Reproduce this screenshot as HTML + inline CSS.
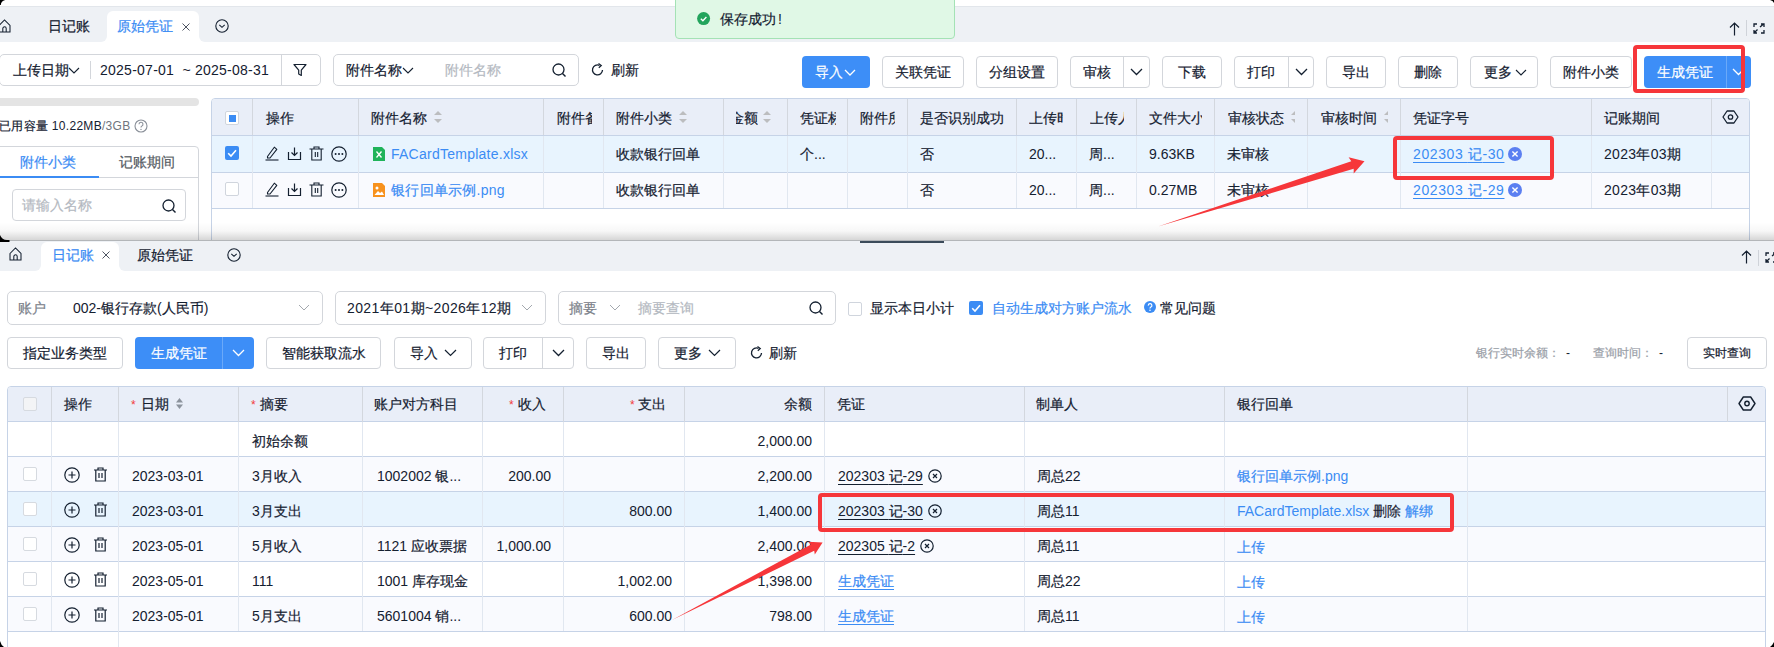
<!DOCTYPE html><html><head><meta charset="utf-8"><style>
html,body{margin:0;padding:0}
body{width:1774px;height:647px;position:relative;overflow:hidden;background:#fff;font-family:"Liberation Sans",sans-serif}
.t{position:absolute;white-space:nowrap;line-height:20px;font-size:14px}
.c{-webkit-text-stroke:0.2px currentColor}
svg{overflow:visible}
</style></head><body>
<div style="position:absolute;left:0px;top:6px;width:1774px;height:36px;background:#eef1f5;border-top:1px solid #e2e6eb;box-sizing:border-box;"></div>
<div style="position:absolute;left:101px;top:36px;width:6px;height:6px;background:#fff;"></div>
<div style="position:absolute;left:101px;top:30px;width:6px;height:12px;background:#eef1f5;border-bottom-right-radius:6px;"></div>
<div style="position:absolute;left:199px;top:36px;width:6px;height:6px;background:#fff;"></div>
<div style="position:absolute;left:199px;top:30px;width:6px;height:12px;background:#eef1f5;border-bottom-left-radius:6px;"></div>
<div style="position:absolute;left:107px;top:11px;width:92px;height:31px;background:#fff;border-radius:6px 6px 0 0;"></div>
<svg style="position:absolute;left:-2px;top:19px;" width="14" height="14" viewBox="0 0 14 14"><path d="M1 6.5 L6.5 1 L12 6.5 V13 H1 Z" fill="none" stroke="#142030" stroke-width="1.05"/><path d="M4.8 13 V9.5 A1.7 1.7 0 0 1 8.2 9.5 V13" fill="none" stroke="#142030" stroke-width="1.05"/></svg>
<div class="t" style="left:48px;top:16px;font-size:14px;color:#142030;"><span class="c">日记账</span></div>
<div class="t" style="left:117px;top:16px;font-size:14px;color:#3b8cf4;"><span class="c">原始凭证</span></div>
<svg style="position:absolute;left:182px;top:23px;" width="8" height="8" viewBox="0 0 8 8"><path d="M0.5 0.5 L7.5 7.5 M7.5 0.5 L0.5 7.5" stroke="#3a4250" stroke-width="0.9"/></svg>
<svg style="position:absolute;left:215px;top:19px;" width="14" height="14" viewBox="0 0 14 14"><circle cx="7" cy="7" r="6.2" fill="none" stroke="#142030" stroke-width="1.1"/><polyline points="4.3,5.8 7,8.3 9.7,5.8" fill="none" stroke="#142030" stroke-width="1.1"/></svg>
<svg style="position:absolute;left:1729px;top:22px;" width="11" height="14" viewBox="0 0 11 14"><path d="M5.5 13.5 V1 M1 5.5 L5.5 1 L10 5.5" fill="none" stroke="#142030" stroke-width="1.2"/></svg>
<div style="position:absolute;left:1746px;top:20px;width:1px;height:16px;background:#cfd3d9;"></div>
<svg style="position:absolute;left:1753px;top:23px;" width="12" height="11" viewBox="0 0 12 11"><path d="M1 4 V1 H4 M8 1 H11 V4 M11 7 V10 H8 M4 10 H1 V7 M7 4 L10 1.5 M1.5 9.5 L4.5 6.5" fill="none" stroke="#142030" stroke-width="1.3"/></svg>
<div style="position:absolute;left:675px;top:-5px;width:280px;height:44px;background:#e0f8e6;border:1px solid #a4e2b5;border-radius:4px;box-sizing:border-box;"></div>
<svg style="position:absolute;left:697px;top:12px;" width="13" height="13" viewBox="0 0 13 13"><circle cx="6.6" cy="6.6" r="6.5" fill="#22a45c"/><polyline points="3.8,6.8 5.9,8.8 9.4,5" fill="none" stroke="#fff" stroke-width="1.3"/></svg>
<div class="t" style="left:720px;top:9px;font-size:14px;color:#142030;"><span class="c">保存成功</span><span style="margin-left:2px">!</span></div>
<div style="position:absolute;left:-1px;top:54px;width:322px;height:32px;border:1px solid #d3d6db;border-radius:5px;box-sizing:border-box;"></div>
<div class="t" style="left:13px;top:60px;font-size:14px;color:#142030;"><span class="c">上传日期</span></div>
<svg style="position:absolute;left:67.5px;top:66.5px;" width="12" height="7.0" viewBox="0 0 12 7.0"><polyline points="1,1 6.0,6.0 11,1" fill="none" stroke="#142030" stroke-width="1.1"/></svg>
<div style="position:absolute;left:90px;top:61px;width:1px;height:18px;background:#d3d6db;"></div>
<div class="t" style="left:100px;top:60px;font-size:14px;color:#142030;letter-spacing:0.25px;">2025-07-01 &nbsp;~ 2025-08-31</div>
<div style="position:absolute;left:281px;top:54px;width:1px;height:32px;background:#d3d6db;"></div>
<svg style="position:absolute;left:293px;top:63px;" width="14" height="14" viewBox="0 0 14 14"><path d="M1 1.5 H13 L8.3 7.2 V12.5 L5.7 11 V7.2 Z" fill="none" stroke="#142030" stroke-width="1.2" stroke-linejoin="round"/></svg>
<div style="position:absolute;left:333px;top:54px;width:246px;height:32px;border:1px solid #d3d6db;border-radius:5px;box-sizing:border-box;"></div>
<div class="t" style="left:346px;top:60px;font-size:14px;color:#142030;"><span class="c">附件名称</span></div>
<svg style="position:absolute;left:401.5px;top:66.5px;" width="12" height="7.0" viewBox="0 0 12 7.0"><polyline points="1,1 6.0,6.0 11,1" fill="none" stroke="#142030" stroke-width="1.1"/></svg>
<div class="t" style="left:445px;top:60px;font-size:14px;color:#b4b9c1;"><span class="c">附件名称</span></div>
<svg style="position:absolute;left:552px;top:63px;" width="15" height="15" viewBox="0 0 15 15"><circle cx="6.5" cy="6.5" r="5.5" fill="none" stroke="#142030" stroke-width="1.3"/><path d="M10.5 10.5 L13.5 13.5" stroke="#142030" stroke-width="1.4"/></svg>
<svg style="position:absolute;left:591px;top:63px;" width="14" height="14" viewBox="0 0 14 14"><path d="M11.5 7 A5 5 0 1 1 8.5 2.3" fill="none" stroke="#142030" stroke-width="1.3"/><path d="M7.5 0.5 L10.3 2.5 L7.8 4.8" fill="none" stroke="#142030" stroke-width="1.2"/></svg>
<div class="t" style="left:611px;top:60px;font-size:14px;color:#142030;"><span class="c">刷新</span></div>
<div style="position:absolute;left:802px;top:56px;width:68px;height:32px;background:#3d8ef7;border-radius:4px;"></div>
<div class="t" style="left:815px;top:62px;font-size:14px;color:#fff;"><span class="c">导入</span></div>
<svg style="position:absolute;left:843.5px;top:68.5px;" width="12" height="7.0" viewBox="0 0 12 7.0"><polyline points="1,1 6.0,6.0 11,1" fill="none" stroke="#fff" stroke-width="1.3"/></svg>
<div style="position:absolute;left:882px;top:56px;width:82px;height:32px;background:#fff;border:1px solid #d3d6db;border-radius:4px;box-sizing:border-box;"></div>
<div class="t" style="left:882px;top:62.0px;width:82px;text-align:center;font-size:14px;color:#142030"><span class="c">关联凭证</span></div>
<div style="position:absolute;left:976px;top:56px;width:82px;height:32px;background:#fff;border:1px solid #d3d6db;border-radius:4px;box-sizing:border-box;"></div>
<div class="t" style="left:976px;top:62.0px;width:82px;text-align:center;font-size:14px;color:#142030"><span class="c">分组设置</span></div>
<div style="position:absolute;left:1070px;top:56px;width:80px;height:32px;background:#fff;border:1px solid #d3d6db;border-radius:4px;box-sizing:border-box;"></div>
<div style="position:absolute;left:1123px;top:56px;width:1px;height:32px;background:#d3d6db;"></div>
<svg style="position:absolute;left:1130.0px;top:68.25px;" width="13" height="7.5" viewBox="0 0 13 7.5"><polyline points="1,1 6.5,6.5 12,1" fill="none" stroke="#142030" stroke-width="1.3"/></svg>
<div class="t" style="left:1070px;top:62.0px;width:53px;text-align:center;font-size:14px;color:#142030"><span class="c">审核</span></div>
<div style="position:absolute;left:1162px;top:56px;width:60px;height:32px;background:#fff;border:1px solid #d3d6db;border-radius:4px;box-sizing:border-box;"></div>
<div class="t" style="left:1162px;top:62.0px;width:60px;text-align:center;font-size:14px;color:#142030"><span class="c">下载</span></div>
<div style="position:absolute;left:1234px;top:56px;width:80px;height:32px;background:#fff;border:1px solid #d3d6db;border-radius:4px;box-sizing:border-box;"></div>
<div style="position:absolute;left:1288px;top:56px;width:1px;height:32px;background:#d3d6db;"></div>
<svg style="position:absolute;left:1294.5px;top:68.25px;" width="13" height="7.5" viewBox="0 0 13 7.5"><polyline points="1,1 6.5,6.5 12,1" fill="none" stroke="#142030" stroke-width="1.3"/></svg>
<div class="t" style="left:1234px;top:62.0px;width:54px;text-align:center;font-size:14px;color:#142030"><span class="c">打印</span></div>
<div style="position:absolute;left:1326px;top:56px;width:60px;height:32px;background:#fff;border:1px solid #d3d6db;border-radius:4px;box-sizing:border-box;"></div>
<div class="t" style="left:1326px;top:62.0px;width:60px;text-align:center;font-size:14px;color:#142030"><span class="c">导出</span></div>
<div style="position:absolute;left:1398px;top:56px;width:60px;height:32px;background:#fff;border:1px solid #d3d6db;border-radius:4px;box-sizing:border-box;"></div>
<div class="t" style="left:1398px;top:62.0px;width:60px;text-align:center;font-size:14px;color:#142030"><span class="c">删除</span></div>
<div style="position:absolute;left:1470px;top:56px;width:68px;height:32px;background:#fff;border:1px solid #d3d6db;border-radius:4px;box-sizing:border-box;"></div>
<div class="t" style="left:1484px;top:62px;font-size:14px;color:#142030;"><span class="c">更多</span></div>
<svg style="position:absolute;left:1514.5px;top:68.5px;" width="12" height="7.0" viewBox="0 0 12 7.0"><polyline points="1,1 6.0,6.0 11,1" fill="none" stroke="#142030" stroke-width="1.1"/></svg>
<div style="position:absolute;left:1550px;top:56px;width:82px;height:32px;background:#fff;border:1px solid #d3d6db;border-radius:4px;box-sizing:border-box;"></div>
<div class="t" style="left:1550px;top:62.0px;width:82px;text-align:center;font-size:14px;color:#142030"><span class="c">附件小类</span></div>
<div style="position:absolute;left:1644px;top:56px;width:107px;height:32px;background:#3d8ef7;border-radius:4px;"></div>
<div style="position:absolute;left:1726px;top:56px;width:1px;height:32px;background:#6aa9f9;"></div>
<svg style="position:absolute;left:1732.0px;top:68.25px;" width="13" height="7.5" viewBox="0 0 13 7.5"><polyline points="1,1 6.5,6.5 12,1" fill="none" stroke="#fff" stroke-width="1.3"/></svg>
<div class="t" style="left:1644px;top:62.0px;width:82px;text-align:center;font-size:14px;color:#fff"><span class="c">生成凭证</span></div>
<div style="position:absolute;left:-5px;top:98px;width:204px;height:8px;background:#e4e4e4;border-radius:4px;"></div>
<div class="t" style="left:-1px;top:116px;font-size:12px;color:#142030;letter-spacing:0.3px;"><span class="c">已用容量</span> 10.22MB<span style="color:#6f757d">/3GB</span></div>
<svg style="position:absolute;left:133.5px;top:119px;" width="14" height="14" viewBox="0 0 14 14"><circle cx="7" cy="7" r="6" fill="none" stroke="#8a9099" stroke-width="1.1"/><path d="M5 5.3 A2 2 0 1 1 7.6 7.2 Q7 7.5 7 8.6" fill="none" stroke="#8a9099" stroke-width="1.1"/><circle cx="7" cy="10.4" r="0.7" fill="#8a9099"/></svg>
<div style="position:absolute;left:-5px;top:146px;width:204px;height:120px;border:1px solid #d3d6db;border-radius:4px;box-sizing:border-box;"></div>
<div style="position:absolute;left:0px;top:177px;width:198px;height:1px;background:#d3d6db;"></div>
<div style="position:absolute;left:0px;top:176px;width:99px;height:2px;background:#3b8cf4;"></div>
<div class="t" style="left:20px;top:152px;font-size:14px;color:#3b8cf4;"><span class="c">附件小类</span></div>
<div class="t" style="left:119px;top:152px;font-size:14px;color:#555b63;"><span class="c">记账期间</span></div>
<div style="position:absolute;left:12px;top:189px;width:174px;height:32px;border:1px solid #d3d6db;border-radius:4px;box-sizing:border-box;"></div>
<div class="t" style="left:22px;top:195px;font-size:14px;color:#b4b9c1;"><span class="c">请输入名称</span></div>
<svg style="position:absolute;left:162px;top:199px;" width="15" height="15" viewBox="0 0 15 15"><circle cx="6.5" cy="6.5" r="5.5" fill="none" stroke="#142030" stroke-width="1.3"/><path d="M10.5 10.5 L13.5 13.5" stroke="#142030" stroke-width="1.4"/></svg>
<div style="position:absolute;left:211px;top:98px;width:1539px;height:150px;border:1px solid #c6d3e7;border-radius:4px 4px 0 0;box-sizing:border-box;background:#fff;"></div>
<div style="position:absolute;left:212px;top:99px;width:1537px;height:36px;background:#e9eef8;border-radius:3px 3px 0 0;"></div>
<div style="position:absolute;left:212px;top:135px;width:1537px;height:37px;background:#e8f4fe;"></div>
<div style="position:absolute;left:212px;top:172px;width:1537px;height:36px;background:#f9fafe;"></div>
<div style="position:absolute;left:211px;top:135px;width:1539px;height:1px;background:#c6d3e7;"></div>
<div style="position:absolute;left:211px;top:172px;width:1539px;height:1px;background:#c6d3e7;"></div>
<div style="position:absolute;left:211px;top:208px;width:1539px;height:1px;background:#c6d3e7;"></div>
<div style="position:absolute;left:252px;top:99px;width:1px;height:36px;background:#d3d7de;"></div>
<div style="position:absolute;left:252px;top:136px;width:1px;height:72px;background:#e1e7f0;"></div>
<div style="position:absolute;left:358px;top:99px;width:1px;height:36px;background:#d3d7de;"></div>
<div style="position:absolute;left:358px;top:136px;width:1px;height:72px;background:#e1e7f0;"></div>
<div style="position:absolute;left:543px;top:99px;width:1px;height:36px;background:#d3d7de;"></div>
<div style="position:absolute;left:543px;top:136px;width:1px;height:72px;background:#e1e7f0;"></div>
<div style="position:absolute;left:603px;top:99px;width:1px;height:36px;background:#d3d7de;"></div>
<div style="position:absolute;left:603px;top:136px;width:1px;height:72px;background:#e1e7f0;"></div>
<div style="position:absolute;left:723px;top:99px;width:1px;height:36px;background:#d3d7de;"></div>
<div style="position:absolute;left:723px;top:136px;width:1px;height:72px;background:#e1e7f0;"></div>
<div style="position:absolute;left:787px;top:99px;width:1px;height:36px;background:#d3d7de;"></div>
<div style="position:absolute;left:787px;top:136px;width:1px;height:72px;background:#e1e7f0;"></div>
<div style="position:absolute;left:847px;top:99px;width:1px;height:36px;background:#d3d7de;"></div>
<div style="position:absolute;left:847px;top:136px;width:1px;height:72px;background:#e1e7f0;"></div>
<div style="position:absolute;left:907px;top:99px;width:1px;height:36px;background:#d3d7de;"></div>
<div style="position:absolute;left:907px;top:136px;width:1px;height:72px;background:#e1e7f0;"></div>
<div style="position:absolute;left:1016px;top:99px;width:1px;height:36px;background:#d3d7de;"></div>
<div style="position:absolute;left:1016px;top:136px;width:1px;height:72px;background:#e1e7f0;"></div>
<div style="position:absolute;left:1076px;top:99px;width:1px;height:36px;background:#d3d7de;"></div>
<div style="position:absolute;left:1076px;top:136px;width:1px;height:72px;background:#e1e7f0;"></div>
<div style="position:absolute;left:1136px;top:99px;width:1px;height:36px;background:#d3d7de;"></div>
<div style="position:absolute;left:1136px;top:136px;width:1px;height:72px;background:#e1e7f0;"></div>
<div style="position:absolute;left:1214px;top:99px;width:1px;height:36px;background:#d3d7de;"></div>
<div style="position:absolute;left:1214px;top:136px;width:1px;height:72px;background:#e1e7f0;"></div>
<div style="position:absolute;left:1307px;top:99px;width:1px;height:36px;background:#d3d7de;"></div>
<div style="position:absolute;left:1307px;top:136px;width:1px;height:72px;background:#e1e7f0;"></div>
<div style="position:absolute;left:1400px;top:99px;width:1px;height:36px;background:#d3d7de;"></div>
<div style="position:absolute;left:1400px;top:136px;width:1px;height:72px;background:#e1e7f0;"></div>
<div style="position:absolute;left:1591px;top:99px;width:1px;height:36px;background:#d3d7de;"></div>
<div style="position:absolute;left:1591px;top:136px;width:1px;height:72px;background:#e1e7f0;"></div>
<div style="position:absolute;left:1711px;top:99px;width:1px;height:36px;background:#d3d7de;"></div>
<div style="position:absolute;left:1711px;top:136px;width:1px;height:72px;background:#e1e7f0;"></div>
<div style="position:absolute;left:225px;top:111px;width:14px;height:14px;background:#fff;border:1px solid #d0d5dd;border-radius:2px;box-sizing:border-box;"></div>
<div style="position:absolute;left:228.5px;top:114.5px;width:7px;height:7px;background:#3b8cf4;"></div>
<div class="t" style="left:266px;top:108px;font-size:14px;color:#142030;"><span class="c">操作</span></div>
<div class="t" style="left:371px;top:108px;font-size:14px;color:#142030;"><span class="c">附件名称</span></div>
<svg style="position:absolute;left:434px;top:111px;" width="8" height="12" viewBox="0 0 8 12"><path d="M0 4 L4 0 L8 4 Z M0 8 L4 12 L8 8 Z" fill="#bcbdbf"/></svg>
<div class="t" style="left:557px;top:108px;width:35px;overflow:hidden;color:#142030"><span class="c">附件备注</span></div>
<div class="t" style="left:616px;top:108px;font-size:14px;color:#142030;"><span class="c">附件小类</span></div>
<svg style="position:absolute;left:679px;top:111px;" width="8" height="12" viewBox="0 0 8 12"><path d="M0 4 L4 0 L8 4 Z M0 8 L4 12 L8 8 Z" fill="#bcbdbf"/></svg>
<div class="t" style="left:736px;top:108px;width:22px;overflow:hidden;direction:rtl;color:#142030"><span class="c">金额</span></div>
<svg style="position:absolute;left:763px;top:111px;" width="8" height="12" viewBox="0 0 8 12"><path d="M0 4 L4 0 L8 4 Z M0 8 L4 12 L8 8 Z" fill="#bcbdbf"/></svg>
<div class="t" style="left:800px;top:108px;width:36px;overflow:hidden;color:#142030"><span class="c">凭证标签</span></div>
<div class="t" style="left:860px;top:108px;width:35px;overflow:hidden;color:#142030"><span class="c">附件所属</span></div>
<div class="t" style="left:920px;top:108px;font-size:14px;color:#142030;"><span class="c">是否识别成功</span></div>
<div class="t" style="left:1029px;top:108px;width:34px;overflow:hidden;color:#142030"><span class="c">上传时间</span></div>
<div class="t" style="left:1090px;top:108px;width:34px;overflow:hidden;color:#142030"><span class="c">上传人</span></div>
<div class="t" style="left:1149px;top:108px;width:53px;overflow:hidden;color:#142030"><span class="c">文件大小</span></div>
<div class="t" style="left:1228px;top:108px;font-size:14px;color:#142030;"><span class="c">审核状态</span></div>
<svg style="position:absolute;left:1291px;top:111px;overflow:hidden;" width="4" height="12" viewBox="0 0 4 12"><path d="M0 4 L4 0 L8 4 Z M0 8 L4 12 L8 8 Z" fill="#bcbdbf"/></svg>
<div class="t" style="left:1321px;top:108px;font-size:14px;color:#142030;"><span class="c">审核时间</span></div>
<svg style="position:absolute;left:1384px;top:111px;overflow:hidden;" width="4" height="12" viewBox="0 0 4 12"><path d="M0 4 L4 0 L8 4 Z M0 8 L4 12 L8 8 Z" fill="#bcbdbf"/></svg>
<div class="t" style="left:1413px;top:108px;font-size:14px;color:#142030;"><span class="c">凭证字号</span></div>
<div class="t" style="left:1604px;top:108px;font-size:14px;color:#142030;"><span class="c">记账期间</span></div>
<svg style="position:absolute;left:1721.5px;top:110.0px;" width="17" height="14" viewBox="0 0 17 14"><polygon points="1,7.0 5.050000000000001,1 11.95,1 16,7.0 11.95,13 5.050000000000001,13" fill="none" stroke="#142030" stroke-width="1.3" stroke-linejoin="round"/><circle cx="8.5" cy="7.0" r="2.2" fill="none" stroke="#142030" stroke-width="1.3"/></svg>
<div style="position:absolute;left:225px;top:146px;width:14px;height:14px;background:#3b8cf4;border-radius:2px;"></div>
<svg style="position:absolute;left:225px;top:146px;" width="14" height="14" viewBox="0 0 14 14"><polyline points="3.2,7.2 6,10 11,4.3" fill="none" stroke="#fff" stroke-width="1.6"/></svg>
<svg style="position:absolute;left:265px;top:146px;" width="15" height="15" viewBox="0 0 15 15"><path d="M2.5 10.5 L9.3 1.2 L11.8 3.4 L5 12 H2.5 Z" fill="none" stroke="#142030" stroke-width="1.1" stroke-linejoin="round"/><path d="M0.5 14 H13.5" stroke="#142030" stroke-width="1.1"/></svg>
<svg style="position:absolute;left:287px;top:146px;" width="15" height="15" viewBox="0 0 15 15"><path d="M7.5 1.5 V9.5 M4.5 6.5 L7.5 9.5 L10.5 6.5" fill="none" stroke="#142030" stroke-width="1.2"/><path d="M1.5 6 V13.5 H13.5 V6" fill="none" stroke="#142030" stroke-width="1.2"/></svg>
<svg style="position:absolute;left:309px;top:146px;" width="15" height="15" viewBox="0 0 15 15"><path d="M0.5 3 H14.5 M5 3 V1 H10 V3 M2.8 3 V14 H12.2 V3 M6.3 6 V11 M8.7 6 V11" fill="none" stroke="#142030" stroke-width="1.1"/></svg>
<svg style="position:absolute;left:331px;top:145.5px;" width="16" height="16" viewBox="0 0 16 16"><circle cx="8" cy="8" r="7.2" fill="none" stroke="#142030" stroke-width="1.2"/><circle cx="4.6" cy="8" r="1" fill="#142030"/><circle cx="8" cy="8" r="1" fill="#142030"/><circle cx="11.4" cy="8" r="1" fill="#142030"/></svg>
<svg style="position:absolute;left:373px;top:147px;" width="12" height="14" viewBox="0 0 12 14"><path d="M0 0 H9 L12 3 V14 H0 Z" fill="#1fb35a"/><path d="M3.5 4.5 L8.5 10.5 M8.5 4.5 L3.5 10.5" stroke="#fff" stroke-width="1.3"/></svg>
<div class="t" style="left:391px;top:144px;font-size:14px;color:#3b8cf4;letter-spacing:0.25px;">FACardTemplate.xlsx</div>
<div class="t" style="left:616px;top:144px;font-size:14px;color:#142030;"><span class="c">收款银行回单</span></div>
<div class="t" style="left:800px;top:144px;font-size:14px;color:#142030;"><span class="c">个</span>...</div>
<div class="t" style="left:920px;top:144px;font-size:14px;color:#142030;"><span class="c">否</span></div>
<div class="t" style="left:1029px;top:144px;font-size:14px;color:#142030;">20...</div>
<div class="t" style="left:1089px;top:144px;font-size:14px;color:#142030;"><span class="c">周</span>...</div>
<div class="t" style="left:1149px;top:144px;font-size:14px;color:#142030;">9.63KB</div>
<div class="t" style="left:1227px;top:144px;font-size:14px;color:#142030;"><span class="c">未审核</span></div>
<div class="t" style="left:1413px;top:144px;font-size:14px;color:#3b8cf4;letter-spacing:0.6px;"><span style="text-decoration:underline;text-underline-offset:3px">202303 <span class="c">记</span>-30</span></div>
<svg style="position:absolute;left:1508px;top:146.5px;" width="14" height="14" viewBox="0 0 14 14"><circle cx="7" cy="7" r="7" fill="#5b7ff1"/><path d="M4.4 4.4 L9.6 9.6 M9.6 4.4 L4.4 9.6" stroke="#fff" stroke-width="1.4"/></svg>
<div class="t" style="left:1604px;top:144px;font-size:14px;color:#142030;letter-spacing:0.3px;">2023<span class="c">年</span>03<span class="c">期</span></div>
<div style="position:absolute;left:225px;top:182px;width:14px;height:14px;background:#fff;border:1px solid #d0d5dd;border-radius:2px;box-sizing:border-box;"></div>
<svg style="position:absolute;left:265px;top:182px;" width="15" height="15" viewBox="0 0 15 15"><path d="M2.5 10.5 L9.3 1.2 L11.8 3.4 L5 12 H2.5 Z" fill="none" stroke="#142030" stroke-width="1.1" stroke-linejoin="round"/><path d="M0.5 14 H13.5" stroke="#142030" stroke-width="1.1"/></svg>
<svg style="position:absolute;left:287px;top:182px;" width="15" height="15" viewBox="0 0 15 15"><path d="M7.5 1.5 V9.5 M4.5 6.5 L7.5 9.5 L10.5 6.5" fill="none" stroke="#142030" stroke-width="1.2"/><path d="M1.5 6 V13.5 H13.5 V6" fill="none" stroke="#142030" stroke-width="1.2"/></svg>
<svg style="position:absolute;left:309px;top:182px;" width="15" height="15" viewBox="0 0 15 15"><path d="M0.5 3 H14.5 M5 3 V1 H10 V3 M2.8 3 V14 H12.2 V3 M6.3 6 V11 M8.7 6 V11" fill="none" stroke="#142030" stroke-width="1.1"/></svg>
<svg style="position:absolute;left:331px;top:181.5px;" width="16" height="16" viewBox="0 0 16 16"><circle cx="8" cy="8" r="7.2" fill="none" stroke="#142030" stroke-width="1.2"/><circle cx="4.6" cy="8" r="1" fill="#142030"/><circle cx="8" cy="8" r="1" fill="#142030"/><circle cx="11.4" cy="8" r="1" fill="#142030"/></svg>
<svg style="position:absolute;left:373px;top:183px;" width="12" height="14" viewBox="0 0 12 14"><path d="M0 0 H9 L12 3 V14 H0 Z" fill="#f7921e"/><circle cx="4" cy="5" r="1.5" fill="#fff"/><path d="M1.5 12 L5 8 L7 10 L9 8.5 L11 12 Z" fill="#fff"/></svg>
<div class="t" style="left:391px;top:180px;font-size:14px;color:#3b8cf4;letter-spacing:0.25px;"><span class="c">银行回单示例</span>.png</div>
<div class="t" style="left:616px;top:180px;font-size:14px;color:#142030;"><span class="c">收款银行回单</span></div>
<div class="t" style="left:920px;top:180px;font-size:14px;color:#142030;"><span class="c">否</span></div>
<div class="t" style="left:1029px;top:180px;font-size:14px;color:#142030;">20...</div>
<div class="t" style="left:1089px;top:180px;font-size:14px;color:#142030;"><span class="c">周</span>...</div>
<div class="t" style="left:1149px;top:180px;font-size:14px;color:#142030;">0.27MB</div>
<div class="t" style="left:1227px;top:180px;font-size:14px;color:#142030;"><span class="c">未审核</span></div>
<div class="t" style="left:1413px;top:180px;font-size:14px;color:#3b8cf4;letter-spacing:0.6px;"><span style="text-decoration:underline;text-underline-offset:3px">202303 <span class="c">记</span>-29</span></div>
<svg style="position:absolute;left:1508px;top:183px;" width="14" height="14" viewBox="0 0 14 14"><circle cx="7" cy="7" r="7" fill="#5b7ff1"/><path d="M4.4 4.4 L9.6 9.6 M9.6 4.4 L4.4 9.6" stroke="#fff" stroke-width="1.4"/></svg>
<div class="t" style="left:1604px;top:180px;font-size:14px;color:#142030;letter-spacing:0.3px;">2023<span class="c">年</span>03<span class="c">期</span></div>
<div style="position:absolute;left:1393px;top:135.5px;width:161px;height:44px;border:4px solid #f6363a;border-radius:4px;box-sizing:border-box;"></div>
<div style="position:absolute;left:1633px;top:45px;width:112px;height:48px;border:4px solid #f6363a;border-radius:4px;box-sizing:border-box;"></div>
<div style="position:absolute;left:0px;top:222px;width:1774px;height:18px;background:linear-gradient(to bottom, rgba(0,0,0,0) 0%, rgba(0,0,0,0.03) 50%, rgba(0,0,0,0.16) 100%);"></div>
<div style="position:absolute;left:0px;top:240px;width:1774px;height:1px;background:#b3b6b9;"></div>
<svg style="position:absolute;left:0;top:0" width="1774" height="647"><polygon points="1158.0,226.5 1353.7,168.8 1353.7,173.5 1364.5,161.2 1348.6,157.3 1351.3,161.2" fill="#f6363a"/></svg>
<div style="position:absolute;left:0px;top:241px;width:1774px;height:406px;background:#fff;"></div>
<div style="position:absolute;left:0px;top:241px;width:1774px;height:30px;background:#eef1f5;"></div>
<div style="position:absolute;left:35px;top:265px;width:6px;height:6px;background:#fff;"></div>
<div style="position:absolute;left:35px;top:259px;width:6px;height:12px;background:#eef1f5;border-bottom-right-radius:6px;"></div>
<div style="position:absolute;left:119px;top:265px;width:6px;height:6px;background:#fff;"></div>
<div style="position:absolute;left:119px;top:259px;width:6px;height:12px;background:#eef1f5;border-bottom-left-radius:6px;"></div>
<div style="position:absolute;left:41px;top:242px;width:78px;height:29px;background:#fff;border-radius:6px 6px 0 0;"></div>
<svg style="position:absolute;left:9px;top:247px;" width="14" height="14" viewBox="0 0 14 14"><path d="M1 6.5 L6.5 1 L12 6.5 V13 H1 Z" fill="none" stroke="#142030" stroke-width="1.05"/><path d="M4.8 13 V9.5 A1.7 1.7 0 0 1 8.2 9.5 V13" fill="none" stroke="#142030" stroke-width="1.05"/></svg>
<div class="t" style="left:52px;top:245px;font-size:14px;color:#3b8cf4;"><span class="c">日记账</span></div>
<svg style="position:absolute;left:102px;top:251px;" width="8" height="8" viewBox="0 0 8 8"><path d="M0.5 0.5 L7.5 7.5 M7.5 0.5 L0.5 7.5" stroke="#3a4250" stroke-width="0.9"/></svg>
<div class="t" style="left:137px;top:245px;font-size:14px;color:#142030;"><span class="c">原始凭证</span></div>
<svg style="position:absolute;left:227px;top:248px;" width="14" height="14" viewBox="0 0 14 14"><circle cx="7" cy="7" r="6.2" fill="none" stroke="#142030" stroke-width="1.1"/><polyline points="4.3,5.8 7,8.3 9.7,5.8" fill="none" stroke="#142030" stroke-width="1.1"/></svg>
<svg style="position:absolute;left:1741px;top:250px;" width="11" height="14" viewBox="0 0 11 14"><path d="M5.5 13.5 V1 M1 5.5 L5.5 1 L10 5.5" fill="none" stroke="#142030" stroke-width="1.2"/></svg>
<div style="position:absolute;left:1758px;top:250px;width:1px;height:16px;background:#cfd3d9;"></div>
<svg style="position:absolute;left:1765px;top:252px;" width="12" height="11" viewBox="0 0 12 11"><path d="M1 4 V1 H4 M8 1 H11 V4 M11 7 V10 H8 M4 10 H1 V7 M7 4 L10 1.5 M1.5 9.5 L4.5 6.5" fill="none" stroke="#142030" stroke-width="1.3"/></svg>
<div style="position:absolute;left:7px;top:291px;width:316px;height:34px;border:1px solid #d3d6db;border-radius:5px;box-sizing:border-box;"></div>
<div class="t" style="left:18px;top:298px;font-size:14px;color:#7b818a;"><span class="c">账户</span></div>
<div class="t" style="left:73px;top:298px;font-size:14px;color:#142030;">002-<span class="c">银行存款</span>(<span class="c">人民币</span>)</div>
<svg style="position:absolute;left:298.0px;top:304.0px;" width="12" height="7.0" viewBox="0 0 12 7.0"><polyline points="1,1 6.0,6.0 11,1" fill="none" stroke="#a3a8ae" stroke-width="1.0"/></svg>
<div style="position:absolute;left:335px;top:291px;width:211px;height:34px;border:1px solid #d3d6db;border-radius:5px;box-sizing:border-box;"></div>
<div class="t" style="left:347px;top:298px;font-size:14px;color:#142030;letter-spacing:0.4px;">2021<span class="c">年</span>01<span class="c">期</span>~2026<span class="c">年</span>12<span class="c">期</span></div>
<svg style="position:absolute;left:521.0px;top:304.0px;" width="12" height="7.0" viewBox="0 0 12 7.0"><polyline points="1,1 6.0,6.0 11,1" fill="none" stroke="#a3a8ae" stroke-width="1.0"/></svg>
<div style="position:absolute;left:558px;top:291px;width:278px;height:34px;border:1px solid #d3d6db;border-radius:5px;box-sizing:border-box;"></div>
<div class="t" style="left:569px;top:298px;font-size:14px;color:#7b818a;"><span class="c">摘要</span></div>
<svg style="position:absolute;left:609.0px;top:304.0px;" width="12" height="7.0" viewBox="0 0 12 7.0"><polyline points="1,1 6.0,6.0 11,1" fill="none" stroke="#a3a8ae" stroke-width="1.0"/></svg>
<div class="t" style="left:638px;top:298px;font-size:14px;color:#b4b9c1;"><span class="c">摘要查询</span></div>
<svg style="position:absolute;left:809px;top:301px;" width="15" height="15" viewBox="0 0 15 15"><circle cx="6.5" cy="6.5" r="5.5" fill="none" stroke="#142030" stroke-width="1.3"/><path d="M10.5 10.5 L13.5 13.5" stroke="#142030" stroke-width="1.4"/></svg>
<div style="position:absolute;left:848px;top:301.5px;width:14px;height:14px;background:#fff;border:1px solid #d0d5dd;border-radius:2px;box-sizing:border-box;"></div>
<div class="t" style="left:870px;top:298px;font-size:14px;color:#142030;"><span class="c">显示本日小计</span></div>
<div style="position:absolute;left:969px;top:301px;width:14px;height:14px;background:#3b8cf4;border-radius:2px;"></div>
<svg style="position:absolute;left:969px;top:301px;" width="14" height="14" viewBox="0 0 14 14"><polyline points="3.2,7.2 6,10 11,4.3" fill="none" stroke="#fff" stroke-width="1.6"/></svg>
<div class="t" style="left:992px;top:298px;font-size:14px;color:#3b8cf4;"><span class="c">自动生成对方账户流水</span></div>
<svg style="position:absolute;left:1144px;top:301px;" width="12" height="12" viewBox="0 0 12 12"><circle cx="6" cy="6" r="6" fill="#3b8cf4"/><path d="M4.3 4.6 A1.8 1.8 0 1 1 6.6 6.2 Q6 6.5 6 7.4" fill="none" stroke="#fff" stroke-width="1.2"/><circle cx="6" cy="9.2" r="0.8" fill="#fff"/></svg>
<div class="t" style="left:1160px;top:298px;font-size:14px;color:#142030;"><span class="c">常见问题</span></div>
<div style="position:absolute;left:7px;top:337px;width:116px;height:32px;background:#fff;border:1px solid #d3d6db;border-radius:4px;box-sizing:border-box;"></div>
<div class="t" style="left:7px;top:343.0px;width:116px;text-align:center;font-size:14px;color:#142030"><span class="c">指定业务类型</span></div>
<div style="position:absolute;left:135px;top:337px;width:119px;height:32px;background:#3d8ef7;border-radius:4px;"></div>
<div style="position:absolute;left:222px;top:337px;width:1px;height:32px;background:#6aa9f9;"></div>
<svg style="position:absolute;left:231.5px;top:349.25px;" width="13" height="7.5" viewBox="0 0 13 7.5"><polyline points="1,1 6.5,6.5 12,1" fill="none" stroke="#fff" stroke-width="1.3"/></svg>
<div class="t" style="left:135px;top:343.0px;width:87px;text-align:center;font-size:14px;color:#fff"><span class="c">生成凭证</span></div>
<div style="position:absolute;left:266px;top:337px;width:115px;height:32px;background:#fff;border:1px solid #d3d6db;border-radius:4px;box-sizing:border-box;"></div>
<div class="t" style="left:266px;top:343.0px;width:115px;text-align:center;font-size:14px;color:#142030"><span class="c">智能获取流水</span></div>
<div style="position:absolute;left:394px;top:337px;width:78px;height:32px;background:#fff;border:1px solid #d3d6db;border-radius:4px;box-sizing:border-box;"></div>
<div class="t" style="left:410px;top:343px;font-size:14px;color:#142030;"><span class="c">导入</span></div>
<svg style="position:absolute;left:443.5px;top:349.25px;" width="13" height="7.5" viewBox="0 0 13 7.5"><polyline points="1,1 6.5,6.5 12,1" fill="none" stroke="#142030" stroke-width="1.2"/></svg>
<div style="position:absolute;left:483px;top:337px;width:91px;height:32px;background:#fff;border:1px solid #d3d6db;border-radius:4px;box-sizing:border-box;"></div>
<div style="position:absolute;left:542px;top:337px;width:1px;height:32px;background:#d3d6db;"></div>
<svg style="position:absolute;left:551.5px;top:349.25px;" width="13" height="7.5" viewBox="0 0 13 7.5"><polyline points="1,1 6.5,6.5 12,1" fill="none" stroke="#142030" stroke-width="1.3"/></svg>
<div class="t" style="left:483px;top:343.0px;width:59px;text-align:center;font-size:14px;color:#142030"><span class="c">打印</span></div>
<div style="position:absolute;left:586px;top:337px;width:60px;height:32px;background:#fff;border:1px solid #d3d6db;border-radius:4px;box-sizing:border-box;"></div>
<div class="t" style="left:586px;top:343.0px;width:60px;text-align:center;font-size:14px;color:#142030"><span class="c">导出</span></div>
<div style="position:absolute;left:658px;top:337px;width:78px;height:32px;background:#fff;border:1px solid #d3d6db;border-radius:4px;box-sizing:border-box;"></div>
<div class="t" style="left:674px;top:343px;font-size:14px;color:#142030;"><span class="c">更多</span></div>
<svg style="position:absolute;left:707.5px;top:349.25px;" width="13" height="7.5" viewBox="0 0 13 7.5"><polyline points="1,1 6.5,6.5 12,1" fill="none" stroke="#142030" stroke-width="1.2"/></svg>
<svg style="position:absolute;left:750px;top:346px;" width="14" height="14" viewBox="0 0 14 14"><path d="M11.5 7 A5 5 0 1 1 8.5 2.3" fill="none" stroke="#142030" stroke-width="1.3"/><path d="M7.5 0.5 L10.3 2.5 L7.8 4.8" fill="none" stroke="#142030" stroke-width="1.2"/></svg>
<div class="t" style="left:769px;top:343px;font-size:14px;color:#142030;"><span class="c">刷新</span></div>
<div class="t" style="left:1476px;top:343px;font-size:12px;color:#9aa0a8;"><span class="c">银行实时余额：</span></div>
<div class="t" style="left:1566px;top:343px;font-size:12px;color:#142030;">-</div>
<div class="t" style="left:1593px;top:343px;font-size:12px;color:#9aa0a8;"><span class="c">查询时间：</span></div>
<div class="t" style="left:1659px;top:343px;font-size:12px;color:#142030;">-</div>
<div style="position:absolute;left:1687px;top:337px;width:80px;height:32px;background:#fff;border:1px solid #d3d6db;border-radius:4px;box-sizing:border-box;"></div>
<div class="t" style="left:1687px;top:343.0px;width:80px;text-align:center;font-size:12px;color:#142030"><span class="c">实时查询</span></div>
<div style="position:absolute;left:7px;top:386px;width:1759px;height:270px;border:1px solid #c6d3e7;border-radius:4px 4px 0 0;box-sizing:border-box;background:#fff;"></div>
<div style="position:absolute;left:8px;top:387px;width:1757px;height:35px;background:#e9eef8;border-radius:3px 3px 0 0;"></div>
<div style="position:absolute;left:8px;top:421px;width:1757px;height:35px;background:#fff;"></div>
<div style="position:absolute;left:8px;top:456px;width:1757px;height:35px;background:#f9fafe;"></div>
<div style="position:absolute;left:8px;top:491px;width:1757px;height:35px;background:#e8f4fe;"></div>
<div style="position:absolute;left:8px;top:526px;width:1757px;height:35px;background:#f9fafe;"></div>
<div style="position:absolute;left:8px;top:561px;width:1757px;height:35px;background:#fff;"></div>
<div style="position:absolute;left:8px;top:596px;width:1757px;height:35px;background:#f9fafe;"></div>
<div style="position:absolute;left:7px;top:421px;width:1759px;height:1px;background:#c6d3e7;"></div>
<div style="position:absolute;left:7px;top:456px;width:1759px;height:1px;background:#c6d3e7;"></div>
<div style="position:absolute;left:7px;top:491px;width:1759px;height:1px;background:#c6d3e7;"></div>
<div style="position:absolute;left:7px;top:526px;width:1759px;height:1px;background:#c6d3e7;"></div>
<div style="position:absolute;left:7px;top:561px;width:1759px;height:1px;background:#c6d3e7;"></div>
<div style="position:absolute;left:7px;top:596px;width:1759px;height:1px;background:#c6d3e7;"></div>
<div style="position:absolute;left:7px;top:631px;width:1759px;height:1px;background:#c6d3e7;"></div>
<div style="position:absolute;left:51px;top:387px;width:1px;height:35px;background:#d3d7de;"></div>
<div style="position:absolute;left:51px;top:422px;width:1px;height:209px;background:#e1e7f0;"></div>
<div style="position:absolute;left:118px;top:387px;width:1px;height:35px;background:#d3d7de;"></div>
<div style="position:absolute;left:118px;top:422px;width:1px;height:209px;background:#e1e7f0;"></div>
<div style="position:absolute;left:238px;top:387px;width:1px;height:35px;background:#d3d7de;"></div>
<div style="position:absolute;left:238px;top:422px;width:1px;height:209px;background:#e1e7f0;"></div>
<div style="position:absolute;left:362px;top:387px;width:1px;height:35px;background:#d3d7de;"></div>
<div style="position:absolute;left:362px;top:422px;width:1px;height:209px;background:#e1e7f0;"></div>
<div style="position:absolute;left:482px;top:387px;width:1px;height:35px;background:#d3d7de;"></div>
<div style="position:absolute;left:482px;top:422px;width:1px;height:209px;background:#e1e7f0;"></div>
<div style="position:absolute;left:563px;top:387px;width:1px;height:35px;background:#d3d7de;"></div>
<div style="position:absolute;left:563px;top:422px;width:1px;height:209px;background:#e1e7f0;"></div>
<div style="position:absolute;left:684px;top:387px;width:1px;height:35px;background:#d3d7de;"></div>
<div style="position:absolute;left:684px;top:422px;width:1px;height:209px;background:#e1e7f0;"></div>
<div style="position:absolute;left:824px;top:387px;width:1px;height:35px;background:#d3d7de;"></div>
<div style="position:absolute;left:824px;top:422px;width:1px;height:209px;background:#e1e7f0;"></div>
<div style="position:absolute;left:1024px;top:387px;width:1px;height:35px;background:#d3d7de;"></div>
<div style="position:absolute;left:1024px;top:422px;width:1px;height:209px;background:#e1e7f0;"></div>
<div style="position:absolute;left:1224px;top:387px;width:1px;height:35px;background:#d3d7de;"></div>
<div style="position:absolute;left:1224px;top:422px;width:1px;height:209px;background:#e1e7f0;"></div>
<div style="position:absolute;left:1467px;top:387px;width:1px;height:35px;background:#d3d7de;"></div>
<div style="position:absolute;left:1467px;top:422px;width:1px;height:209px;background:#e1e7f0;"></div>
<div style="position:absolute;left:1727px;top:387px;width:1px;height:35px;background:#d3d7de;"></div>
<div style="position:absolute;left:118px;top:631px;width:1px;height:20px;background:#e1e7f0;"></div>
<div style="position:absolute;left:23px;top:397px;width:14px;height:14px;background:#f3f4f6;border:1px solid #d6dae0;border-radius:2px;box-sizing:border-box;"></div>
<div class="t" style="left:64px;top:394px;font-size:14px;color:#142030;"><span class="c">操作</span></div>
<div class="t" style="left:131px;top:395px;font-size:12px;color:#f23c3c">*</div>
<div class="t" style="left:141px;top:394px;font-size:14px;color:#142030;"><span class="c">日期</span></div>
<svg style="position:absolute;left:176px;top:398px;" width="7" height="11" viewBox="0 0 7 11"><path d="M0 4.5 L3.5 0 L7 4.5 Z" fill="#8c939d"/><path d="M0 6.5 L3.5 11 L7 6.5 Z" fill="#8c939d"/></svg>
<div class="t" style="left:251px;top:395px;font-size:12px;color:#f23c3c">*</div>
<div class="t" style="left:260px;top:394px;font-size:14px;color:#142030;"><span class="c">摘要</span></div>
<div class="t" style="left:374px;top:394px;font-size:14px;color:#142030;"><span class="c">账户对方科目</span></div>
<div class="t" style="left:509px;top:395px;font-size:12px;color:#f23c3c">*</div>
<div class="t" style="left:518px;top:394px;font-size:14px;color:#142030;"><span class="c">收入</span></div>
<div class="t" style="left:630px;top:395px;font-size:12px;color:#f23c3c">*</div>
<div class="t" style="left:638px;top:394px;font-size:14px;color:#142030;"><span class="c">支出</span></div>
<div class="t" style="left:784px;top:394px;font-size:14px;color:#142030;"><span class="c">余额</span></div>
<div class="t" style="left:837px;top:394px;font-size:14px;color:#142030;"><span class="c">凭证</span></div>
<div class="t" style="left:1036px;top:394px;font-size:14px;color:#142030;"><span class="c">制单人</span></div>
<div class="t" style="left:1237px;top:394px;font-size:14px;color:#142030;"><span class="c">银行回单</span></div>
<svg style="position:absolute;left:1738.0px;top:396.0px;" width="18" height="15" viewBox="0 0 18 15"><polygon points="1,7.5 5.32,1 12.68,1 17,7.5 12.68,14 5.32,14" fill="none" stroke="#142030" stroke-width="1.4" stroke-linejoin="round"/><circle cx="9.0" cy="7.5" r="2.2" fill="none" stroke="#142030" stroke-width="1.4"/></svg>
<div class="t" style="left:252px;top:431px;font-size:14px;color:#142030;"><span class="c">初始余额</span></div>
<div class="t" style="left:612px;width:200px;text-align:right;top:431px;color:#142030">2,000.00</div>
<div style="position:absolute;left:23px;top:467px;width:14px;height:14px;background:#fff;border:1px solid #d6dae0;border-radius:2px;box-sizing:border-box;"></div>
<svg style="position:absolute;left:63.5px;top:467px;" width="16" height="16" viewBox="0 0 16 16"><circle cx="8" cy="8" r="7.2" fill="none" stroke="#142030" stroke-width="1.2"/><path d="M8 4.5 V11.5 M4.5 8 H11.5" stroke="#142030" stroke-width="1.2"/></svg>
<svg style="position:absolute;left:92.5px;top:467px;" width="15" height="15" viewBox="0 0 15 15"><path d="M1 3 H14 M5 3 V1 H10 V3 M2.8 3 V14 H12.2 V3 M6 6 V11 M9 6 V11" fill="none" stroke="#142030" stroke-width="1.2"/></svg>
<div class="t" style="left:132px;top:466px;font-size:14px;color:#142030;">2023-03-01</div>
<div class="t" style="left:252px;top:466px;font-size:14px;color:#142030;">3<span class="c">月收入</span></div>
<div class="t" style="left:377px;top:466px;font-size:14px;color:#142030;">1002002 <span class="c">银</span>...</div>
<div class="t" style="left:351px;width:200px;text-align:right;top:466px;color:#142030">200.00</div>
<div class="t" style="left:612px;width:200px;text-align:right;top:466px;color:#142030">2,200.00</div>
<div class="t" style="left:838px;top:466px;font-size:14px;color:#142030;"><span style="text-decoration:underline;text-underline-offset:3px">202303 <span class="c">记</span>-29</span></div>
<svg style="position:absolute;left:927.5px;top:469px;" width="14" height="14" viewBox="0 0 14 14"><circle cx="7" cy="7" r="6.2" fill="none" stroke="#142030" stroke-width="1.2"/><path d="M5 5 L9 9 M9 5 L5 9" stroke="#142030" stroke-width="1.2"/></svg>
<div class="t" style="left:1037px;top:466px;font-size:14px;color:#142030;"><span class="c">周总</span>22</div>
<div class="t" style="left:1237px;top:466px;font-size:14px;color:#3b8cf4;"><span class="c">银行回单示例</span>.png</div>
<div style="position:absolute;left:23px;top:502px;width:14px;height:14px;background:#fff;border:1px solid #d6dae0;border-radius:2px;box-sizing:border-box;"></div>
<svg style="position:absolute;left:63.5px;top:502px;" width="16" height="16" viewBox="0 0 16 16"><circle cx="8" cy="8" r="7.2" fill="none" stroke="#142030" stroke-width="1.2"/><path d="M8 4.5 V11.5 M4.5 8 H11.5" stroke="#142030" stroke-width="1.2"/></svg>
<svg style="position:absolute;left:92.5px;top:502px;" width="15" height="15" viewBox="0 0 15 15"><path d="M1 3 H14 M5 3 V1 H10 V3 M2.8 3 V14 H12.2 V3 M6 6 V11 M9 6 V11" fill="none" stroke="#142030" stroke-width="1.2"/></svg>
<div class="t" style="left:132px;top:501px;font-size:14px;color:#142030;">2023-03-01</div>
<div class="t" style="left:252px;top:501px;font-size:14px;color:#142030;">3<span class="c">月支出</span></div>
<div class="t" style="left:472px;width:200px;text-align:right;top:501px;color:#142030">800.00</div>
<div class="t" style="left:612px;width:200px;text-align:right;top:501px;color:#142030">1,400.00</div>
<div class="t" style="left:838px;top:501px;font-size:14px;color:#142030;"><span style="text-decoration:underline;text-underline-offset:3px">202303 <span class="c">记</span>-30</span></div>
<svg style="position:absolute;left:927.5px;top:504px;" width="14" height="14" viewBox="0 0 14 14"><circle cx="7" cy="7" r="6.2" fill="none" stroke="#142030" stroke-width="1.2"/><path d="M5 5 L9 9 M9 5 L5 9" stroke="#142030" stroke-width="1.2"/></svg>
<div class="t" style="left:1037px;top:501px;font-size:14px;color:#142030;"><span class="c">周总</span>11</div>
<div class="t" style="left:1237px;top:501px;font-size:14px;color:#3b8cf4;">FACardTemplate.xlsx <span style="color:#1c2434"><span class="c">删除</span></span> <span class="c">解绑</span></div>
<div style="position:absolute;left:23px;top:537px;width:14px;height:14px;background:#fff;border:1px solid #d6dae0;border-radius:2px;box-sizing:border-box;"></div>
<svg style="position:absolute;left:63.5px;top:537px;" width="16" height="16" viewBox="0 0 16 16"><circle cx="8" cy="8" r="7.2" fill="none" stroke="#142030" stroke-width="1.2"/><path d="M8 4.5 V11.5 M4.5 8 H11.5" stroke="#142030" stroke-width="1.2"/></svg>
<svg style="position:absolute;left:92.5px;top:537px;" width="15" height="15" viewBox="0 0 15 15"><path d="M1 3 H14 M5 3 V1 H10 V3 M2.8 3 V14 H12.2 V3 M6 6 V11 M9 6 V11" fill="none" stroke="#142030" stroke-width="1.2"/></svg>
<div class="t" style="left:132px;top:536px;font-size:14px;color:#142030;">2023-05-01</div>
<div class="t" style="left:252px;top:536px;font-size:14px;color:#142030;">5<span class="c">月收入</span></div>
<div class="t" style="left:377px;top:536px;font-size:14px;color:#142030;">1121 <span class="c">应收票据</span></div>
<div class="t" style="left:351px;width:200px;text-align:right;top:536px;color:#142030">1,000.00</div>
<div class="t" style="left:612px;width:200px;text-align:right;top:536px;color:#142030">2,400.00</div>
<div class="t" style="left:838px;top:536px;font-size:14px;color:#142030;"><span style="text-decoration:underline;text-underline-offset:3px">202305 <span class="c">记</span>-2</span></div>
<svg style="position:absolute;left:919.5px;top:539px;" width="14" height="14" viewBox="0 0 14 14"><circle cx="7" cy="7" r="6.2" fill="none" stroke="#142030" stroke-width="1.2"/><path d="M5 5 L9 9 M9 5 L5 9" stroke="#142030" stroke-width="1.2"/></svg>
<div class="t" style="left:1037px;top:536px;font-size:14px;color:#142030;"><span class="c">周总</span>11</div>
<div class="t" style="left:1237px;top:537px;font-size:14px;color:#3b8cf4;"><span class="c">上传</span></div>
<div style="position:absolute;left:23px;top:572px;width:14px;height:14px;background:#fff;border:1px solid #d6dae0;border-radius:2px;box-sizing:border-box;"></div>
<svg style="position:absolute;left:63.5px;top:572px;" width="16" height="16" viewBox="0 0 16 16"><circle cx="8" cy="8" r="7.2" fill="none" stroke="#142030" stroke-width="1.2"/><path d="M8 4.5 V11.5 M4.5 8 H11.5" stroke="#142030" stroke-width="1.2"/></svg>
<svg style="position:absolute;left:92.5px;top:572px;" width="15" height="15" viewBox="0 0 15 15"><path d="M1 3 H14 M5 3 V1 H10 V3 M2.8 3 V14 H12.2 V3 M6 6 V11 M9 6 V11" fill="none" stroke="#142030" stroke-width="1.2"/></svg>
<div class="t" style="left:132px;top:571px;font-size:14px;color:#142030;">2023-05-01</div>
<div class="t" style="left:252px;top:571px;font-size:14px;color:#142030;">111</div>
<div class="t" style="left:377px;top:571px;font-size:14px;color:#142030;">1001 <span class="c">库存现金</span></div>
<div class="t" style="left:472px;width:200px;text-align:right;top:571px;color:#142030">1,002.00</div>
<div class="t" style="left:612px;width:200px;text-align:right;top:571px;color:#142030">1,398.00</div>
<div class="t" style="left:838px;top:571px;font-size:14px;color:#3b8cf4;"><span style="text-decoration:underline;text-underline-offset:3px"><span class="c">生成凭证</span></span></div>
<div class="t" style="left:1037px;top:571px;font-size:14px;color:#142030;"><span class="c">周总</span>22</div>
<div class="t" style="left:1237px;top:572px;font-size:14px;color:#3b8cf4;"><span class="c">上传</span></div>
<div style="position:absolute;left:23px;top:607px;width:14px;height:14px;background:#fff;border:1px solid #d6dae0;border-radius:2px;box-sizing:border-box;"></div>
<svg style="position:absolute;left:63.5px;top:607px;" width="16" height="16" viewBox="0 0 16 16"><circle cx="8" cy="8" r="7.2" fill="none" stroke="#142030" stroke-width="1.2"/><path d="M8 4.5 V11.5 M4.5 8 H11.5" stroke="#142030" stroke-width="1.2"/></svg>
<svg style="position:absolute;left:92.5px;top:607px;" width="15" height="15" viewBox="0 0 15 15"><path d="M1 3 H14 M5 3 V1 H10 V3 M2.8 3 V14 H12.2 V3 M6 6 V11 M9 6 V11" fill="none" stroke="#142030" stroke-width="1.2"/></svg>
<div class="t" style="left:132px;top:606px;font-size:14px;color:#142030;">2023-05-01</div>
<div class="t" style="left:252px;top:606px;font-size:14px;color:#142030;">5<span class="c">月支出</span></div>
<div class="t" style="left:377px;top:606px;font-size:14px;color:#142030;">5601004 <span class="c">销</span>...</div>
<div class="t" style="left:472px;width:200px;text-align:right;top:606px;color:#142030">600.00</div>
<div class="t" style="left:612px;width:200px;text-align:right;top:606px;color:#142030">798.00</div>
<div class="t" style="left:838px;top:606px;font-size:14px;color:#3b8cf4;"><span style="text-decoration:underline;text-underline-offset:3px"><span class="c">生成凭证</span></span></div>
<div class="t" style="left:1037px;top:606px;font-size:14px;color:#142030;"><span class="c">周总</span>11</div>
<div class="t" style="left:1237px;top:607px;font-size:14px;color:#3b8cf4;"><span class="c">上传</span></div>
<div style="position:absolute;left:818px;top:492.5px;width:636px;height:39px;border:4px solid #f6363a;border-radius:4px;box-sizing:border-box;"></div>
<svg style="position:absolute;left:0;top:0" width="1774" height="647"><polygon points="672.0,620.0 814.2,550.7 814.8,554.5 822.6,542.4 808.2,541.7 811.0,544.4" fill="#f6363a"/></svg>
<div style="position:absolute;left:860px;top:241px;width:84px;height:1.5px;background:#3b4b5a;"></div>
<svg style="position:absolute;left:0;top:234px" width="10" height="9"><path d="M0 1 Q2 6 7 6 H9.5 V8 H0 Z" fill="#000"/></svg>
<svg style="position:absolute;left:0;top:641px" width="4" height="6"><path d="M0 0 Q1 4 4 6 H0 Z" fill="#000"/></svg>
<svg style="position:absolute;left:1770px;top:642px" width="4" height="5"><path d="M4 0 Q2 4 0 5 H4 Z" fill="#000"/></svg>
<svg style="position:absolute;left:0;top:0" width="8" height="8"><path d="M0 0 H5.2 Q1 1 0.8 5 H0 Z" fill="#000"/></svg>
<svg style="position:absolute;left:1766px;top:0" width="8" height="8"><path d="M8 0 H4 Q7 0.5 8 3 Z" fill="#000"/></svg>
</body></html>
